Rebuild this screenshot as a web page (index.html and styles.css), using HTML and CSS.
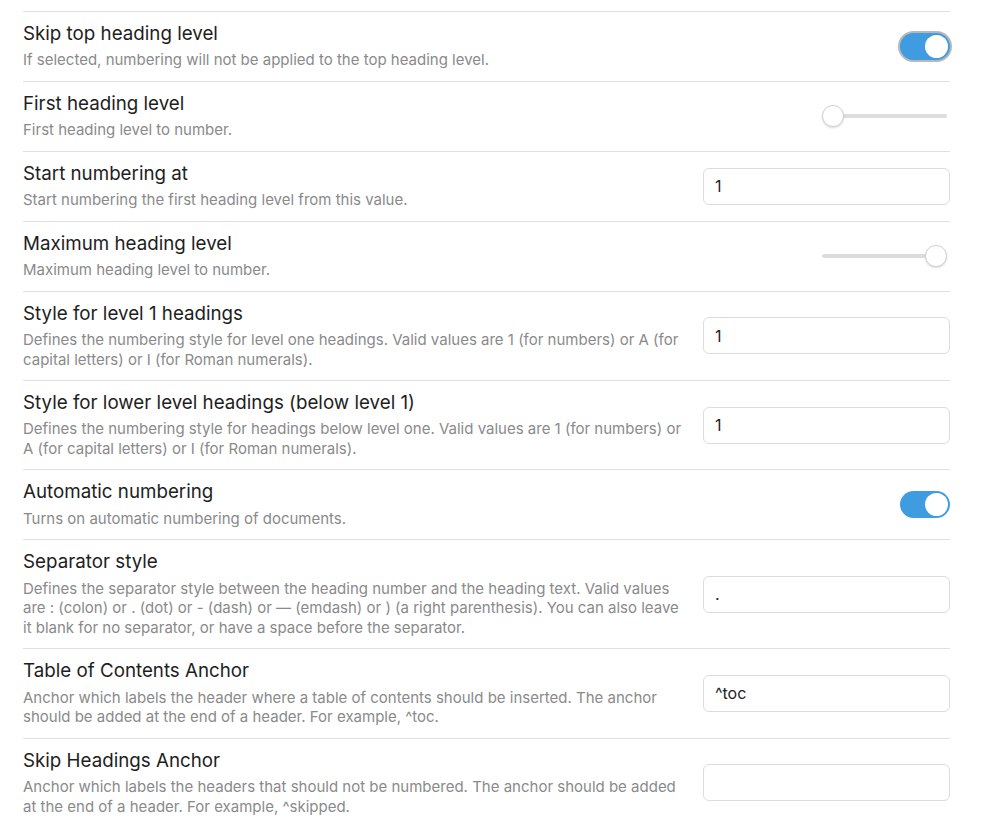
FILE: index.html
```html
<!DOCTYPE html>
<html>
<head>
<meta charset="utf-8">
<link rel="stylesheet" href="styles.css">
</head>
<body>
<div class="settings">
  <div class="setting-item">
    <div class="info">
      <div class="name">Skip top heading level</div>
      <div class="desc">If selected, numbering will not be applied to the top heading level.</div>
    </div>
    <div class="control"><div class="toggle on focused"><div class="knob"></div></div></div>
  </div>
  <div class="setting-item">
    <div class="info">
      <div class="name">First heading level</div>
      <div class="desc">First heading level to number.</div>
    </div>
    <div class="control"><input class="slider" type="range" min="1" max="6" value="1"></div>
  </div>
  <div class="setting-item">
    <div class="info">
      <div class="name">Start numbering at</div>
      <div class="desc">Start numbering the first heading level from this value.</div>
    </div>
    <div class="control"><input class="text" type="text" value="1"></div>
  </div>
  <div class="setting-item">
    <div class="info">
      <div class="name">Maximum heading level</div>
      <div class="desc">Maximum heading level to number.</div>
    </div>
    <div class="control"><input class="slider" type="range" min="1" max="6" value="6"></div>
  </div>
  <div class="setting-item">
    <div class="info">
      <div class="name">Style for level 1 headings</div>
      <div class="desc">Defines the numbering style for level one headings. Valid values are 1 (for numbers) or A (for capital letters) or I (for Roman numerals).</div>
    </div>
    <div class="control"><input class="text" type="text" value="1"></div>
  </div>
  <div class="setting-item">
    <div class="info">
      <div class="name">Style for lower level headings (below level 1)</div>
      <div class="desc">Defines the numbering style for headings below level one. Valid values are 1 (for numbers) or A (for capital letters) or I (for Roman numerals).</div>
    </div>
    <div class="control"><input class="text" type="text" value="1"></div>
  </div>
  <div class="setting-item">
    <div class="info">
      <div class="name">Automatic numbering</div>
      <div class="desc">Turns on automatic numbering of documents.</div>
    </div>
    <div class="control"><div class="toggle on"><div class="knob"></div></div></div>
  </div>
  <div class="setting-item">
    <div class="info">
      <div class="name">Separator style</div>
      <div class="desc">Defines the separator style between the heading number and the heading text. Valid values are : (colon) or . (dot) or - (dash) or — (emdash) or ) (a right parenthesis). You can also leave it blank for no separator, or have a space before the separator.</div>
    </div>
    <div class="control"><input class="text" type="text" value="."></div>
  </div>
  <div class="setting-item">
    <div class="info">
      <div class="name">Table of Contents Anchor</div>
      <div class="desc">Anchor which labels the header where a table of contents should be inserted. The anchor should be added at the end of a header. For example, ^toc.</div>
    </div>
    <div class="control"><input class="text" type="text" value="^toc"></div>
  </div>
  <div class="setting-item">
    <div class="info">
      <div class="name">Skip Headings Anchor</div>
      <div class="desc">Anchor which labels the headers that should not be numbered. The anchor should be added at the end of a header. For example, ^skipped.</div>
    </div>
    <div class="control"><input class="text" type="text" value=""></div>
  </div>
</div>
</body>
</html>
```

FILE: styles.css
```css
html, body {
  margin: 0;
  padding: 0;
  background: #ffffff;
}
body {
  font-family: Inter, "Noto Sans", sans-serif;
  color: #222222;
}
.settings {
  margin: 11px 50px 0 23px;
}
.setting-item {
  display: flex;
  align-items: center;
  border-top: 1px solid #e0e0e0;
  padding: 11px 0;
}
.info {
  flex: 1 1 auto;
  margin-right: 20px;
}
.name {
  font-size: 18.75px;
  line-height: 21.4px;
  color: #1e1e1e;
}
.desc {
  margin-top: 6px;
  font-size: 15px;
  line-height: 19.5px;
  color: #8a8a8a;
}
.control {
  flex: 0 0 auto;
  display: flex;
  align-items: center;
  justify-content: flex-end;
}
.toggle {
  width: 50px;
  height: 27px;
  border-radius: 14px;
  background: #409ce0;
  position: relative;
  box-sizing: border-box;
}
.toggle.focused {
  box-shadow: 0 0 0 2px #b8b8b8;
}
.knob {
  position: absolute;
  top: 2px;
  right: 2px;
  width: 23px;
  height: 23px;
  border-radius: 50%;
  background: #ffffff;
}
.slider {
  -webkit-appearance: none;
  appearance: none;
  width: 125px;
  height: 22px;
  margin: 0 3px 0 0;
  padding: 0;
  background: transparent;
}
.slider::-webkit-slider-runnable-track {
  height: 4px;
  border-radius: 2px;
  background: #dddddd;
}
.slider::-webkit-slider-thumb {
  -webkit-appearance: none;
  appearance: none;
  width: 22px;
  height: 22px;
  margin-top: -9px;
  border-radius: 50%;
  background: #ffffff;
  border: 1px solid #d2d2d2;
  box-sizing: border-box;
  box-shadow: 0 1px 2px rgba(0,0,0,0.15);
}
.text {
  width: 247px;
  height: 37px;
  box-sizing: border-box;
  border: 1px solid #dcdcdc;
  border-radius: 6px;
  padding: 0 11px;
  font-family: Inter, "Noto Sans", sans-serif;
  font-size: 16px;
  color: #222222;
  background: #ffffff;
  outline: none;
  margin: 0;
}
```
